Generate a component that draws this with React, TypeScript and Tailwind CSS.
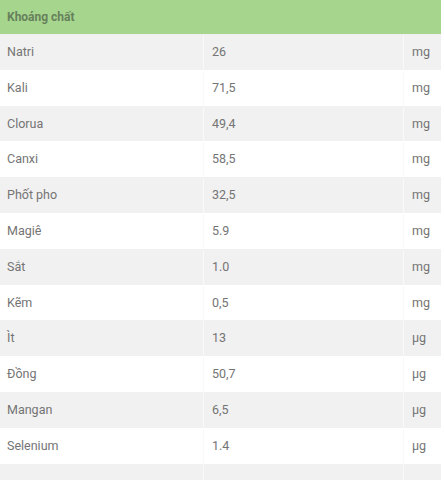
import React from "react";

const rows: [string, string, string][] = [
  ["Natri", "26", "mg"],
  ["Kali", "71,5", "mg"],
  ["Clorua", "49,4", "mg"],
  ["Canxi", "58,5", "mg"],
  ["Phốt pho", "32,5", "mg"],
  ["Magiê", "5.9", "mg"],
  ["Sắt", "1.0", "mg"],
  ["Kẽm", "0,5", "mg"],
  ["Ìt", "13", "µg"],
  ["Đồng", "50,7", "µg"],
  ["Mangan", "6,5", "µg"],
  ["Selenium", "1.4", "µg"],
  ["", "", ""],
];

export default function App() {
  return (
    <div className="w-[444px] h-[480px] overflow-hidden bg-white" style={{ fontFamily: "Roboto, 'Liberation Sans', sans-serif" }}>
      <div className="w-[441px]">
        <div className="h-[34px] bg-[#a6d68e] flex items-center pl-[7px] text-[12px] font-bold text-[#66805c]">
          Khoáng chất
        </div>
        {rows.map((r, i) => (
          <div
            key={i}
            className={`h-[35.8px] flex text-[12.5px] text-[#747474] pt-[1px] ${i % 2 === 0 ? "bg-[#f1f1f1]" : "bg-white"}`}
          >
            <div className="w-[204px] flex items-center pl-[7px] border-r border-[#f9f9f9]">{r[0]}</div>
            <div className="w-[200px] flex items-center pl-[8px] border-r border-[#f9f9f9]">{r[1]}</div>
            <div className="flex-1 flex items-center pl-[8px]">{r[2]}</div>
          </div>
        ))}
      </div>
    </div>
  );
}
